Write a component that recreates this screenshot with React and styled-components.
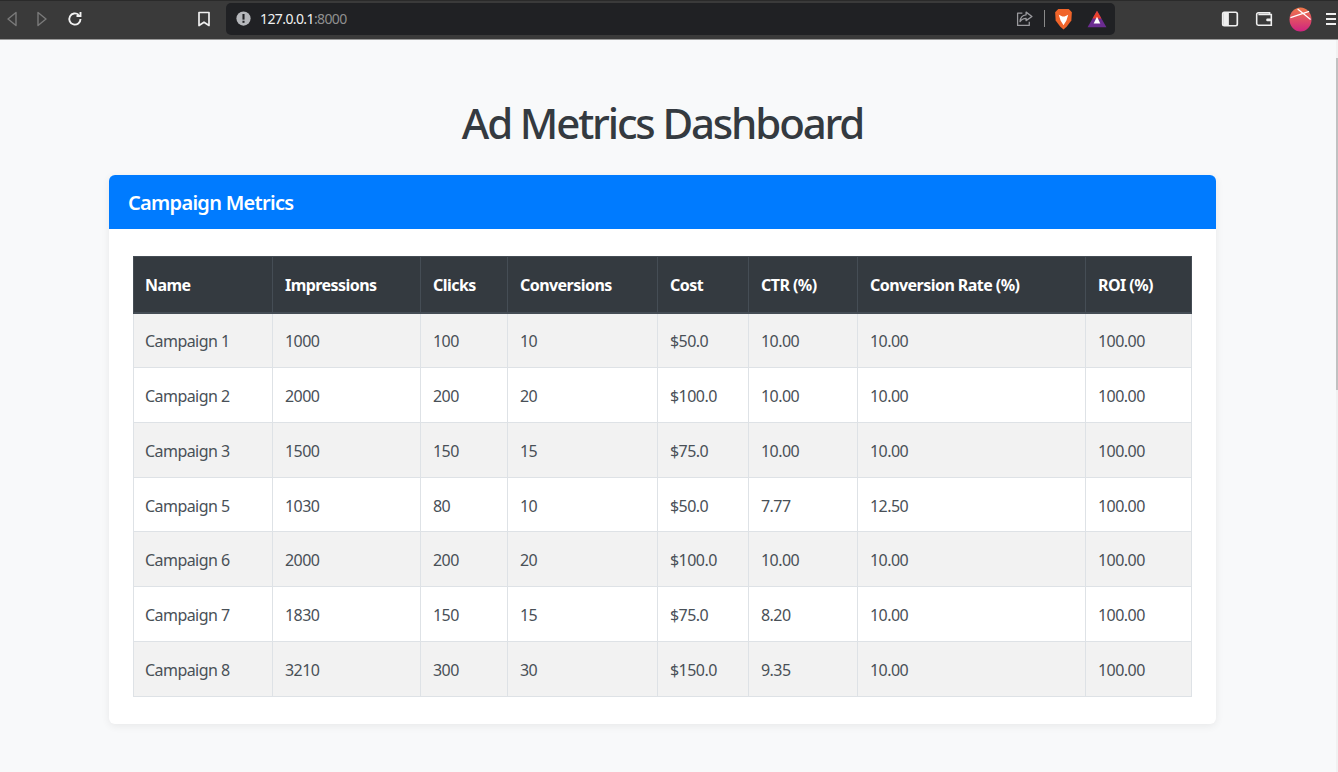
import React from "react"
import styled, { createGlobalStyle } from "styled-components"

const campaigns = [
    ["Campaign 1", "1000", "100", "10", "$50.0", "10.00", "10.00", "100.00"],
    ["Campaign 2", "2000", "200", "20", "$100.0", "10.00", "10.00", "100.00"],
    ["Campaign 3", "1500", "150", "15", "$75.0", "10.00", "10.00", "100.00"],
    ["Campaign 5", "1030", "80", "10", "$50.0", "7.77", "12.50", "100.00"],
    ["Campaign 6", "2000", "200", "20", "$100.0", "10.00", "10.00", "100.00"],
    ["Campaign 7", "1830", "150", "15", "$75.0", "8.20", "10.00", "100.00"],
    ["Campaign 8", "3210", "300", "30", "$150.0", "9.35", "10.00", "100.00"],
]

const headers = ["Name", "Impressions", "Clicks", "Conversions", "Cost", "CTR (%)", "Conversion Rate (%)", "ROI (%)"]
const widths = [139, 148, 87, 150, 91, 109, 228, 106]

const Global = createGlobalStyle`
    html, body {
        margin: 0;
        padding: 0;
        height: 772px;
        overflow: hidden;
        background: #F8F9FA;
        font-family: "Noto Sans", "Open Sans", sans-serif;
    }
`

export default function App() {
    return (
        <>
            <Global />
            <Page>
                <BrowserBar>
                    <NavGroup>
                        <NavIcon viewBox="0 0 16 16"><path d="M12 1.5 L4 8 L12 14.5 Z" fill="none" stroke="#7a7a7a" strokeWidth="1.4" strokeLinejoin="round" /></NavIcon>
                        <NavIcon viewBox="0 0 16 16"><path d="M4 1.5 L12 8 L4 14.5 Z" fill="none" stroke="#7a7a7a" strokeWidth="1.4" strokeLinejoin="round" /></NavIcon>
                        <NavIcon viewBox="0 0 16 16"><path d="M13.5 8 A5.6 5.6 0 1 1 11.7 3.9 M13.5 1 V5 H9.5" fill="none" stroke="#f2f2f2" strokeWidth="1.9" /></NavIcon>
                    </NavGroup>
                    <Bookmark viewBox="0 0 14 16"><path d="M2 1.5 H12 V14.5 L7 11.2 L2 14.5 Z" fill="none" stroke="#efefef" strokeWidth="1.7" strokeLinejoin="round" /></Bookmark>
                    <AddressBar>
                        <UrlInfo viewBox="0 0 16 16">
                            <circle cx="8" cy="8" r="7.6" fill="#b5b7bb" />
                            <rect x="6.9" y="3.2" width="2.2" height="6" fill="#202124" />
                            <rect x="6.9" y="10.4" width="2.2" height="2.2" fill="#202124" />
                        </UrlInfo>
                        <Url>127.0.0.1<span>:8000</span></Url>
                        <UrlTools>
                            <ShareIcon viewBox="0 0 16 16"><path d="M9.5 2 L15 6.2 L9.5 10 V7.8 C6.5 7.8 5 9 3.8 11 C4 7.5 6 4.8 9.5 4.5 Z M6 3 H1.5 V14.5 H12.5 V11" fill="none" stroke="#9a9a9e" strokeWidth="1.2" strokeLinejoin="round" /></ShareIcon>
                            <ToolDivider />
                            <BraveIcon viewBox="0 0 18 21"><path d="M4 1 H14 L17 4 L16.5 12 L12 18 L9 20.5 L6 18 L1.5 12 L1 4 Z" fill="#f0642a" /><path d="M4.5 6.5 L8 8 H10 L13.5 6.5 L11.8 12 L9 16.5 L6.2 12 Z" fill="#fff" /></BraveIcon>
                            <BatIcon viewBox="0 0 18 16"><path d="M9 0.5 L17.5 15.5 H0.5 Z" fill="#6b2c91" /><path d="M9 0.5 L13 7.5 H5 Z" fill="#e8412d" /><path d="M9 6 L12 12 H6 Z" fill="#fff" /></BatIcon>
                        </UrlTools>
                    </AddressBar>
                    <RightTools>
                        <SmallIcon viewBox="0 0 16 16"><rect x="1.5" y="2" width="13" height="12" rx="1.5" fill="none" stroke="#efefef" strokeWidth="1.5" /><rect x="2" y="2.5" width="5" height="11" fill="#efefef" /></SmallIcon>
                        <SmallIcon viewBox="0 0 16 16"><path d="M13 4 V2.5 H3 A1.5 1.5 0 0 0 1.5 4 V12 A1.5 1.5 0 0 0 3 13.5 H14.5 V4 H3" fill="none" stroke="#efefef" strokeWidth="1.4" /><rect x="10" y="7.5" width="4.5" height="2.5" rx="1" fill="#efefef" /></SmallIcon>
                        <Avatar viewBox="0 0 24 26">
                            <defs>
                                <linearGradient id="avatarFill" x1="0" y1="0" x2="0" y2="1">
                                    <stop offset="0" stopColor="#f0784a" />
                                    <stop offset="1" stopColor="#cf2480" />
                                </linearGradient>
                            </defs>
                            <ellipse cx="12" cy="13" rx="11.5" ry="12.5" fill="url(#avatarFill)" />
                            <path d="M1.5 11 L21 4.5 M9 2 L22.5 13" stroke="#fff" strokeWidth="1.2" fill="none" />
                        </Avatar>
                        <Menu viewBox="0 0 12 14"><path d="M1 2 H11 M1 7 H11 M1 12 H11" stroke="#efefef" strokeWidth="1.8" /></Menu>
                    </RightTools>
                </BrowserBar>
                <Content>
                    <Title>Ad Metrics Dashboard</Title>
                    <Card>
                        <CardHeader>Campaign Metrics</CardHeader>
                        <CardBody>
                            <Table>
                                <colgroup>
                                    {widths.map((w, i) => <col key={i} style={{ width: w }} />)}
                                </colgroup>
                                <thead>
                                    <tr>
                                        {headers.map((h) => <Th key={h}>{h}</Th>)}
                                    </tr>
                                </thead>
                                <tbody>
                                    {campaigns.map((linha) => (
                                        <Row key={linha[0]}>
                                            {linha.map((valor, i) => <Td key={i}>{valor}</Td>)}
                                        </Row>
                                    ))}
                                </tbody>
                            </Table>
                        </CardBody>
                    </Card>
                </Content>
                <ScrollTrack>
                    <ScrollThumb />
                </ScrollTrack>
            </Page>
        </>
    )
}

const Page = styled.div`
position: relative;
width: 1338px;
height: 772px;
overflow: hidden;
display: flex;
flex-direction: column;
`

const ScrollTrack = styled.div`
position: absolute;
top: 40px;
right: 0;
bottom: 0;
width: 2px;
background: #F1F1F1;
`

const ScrollThumb = styled.div`
margin-top: 18px;
height: 332px;
background: #C1C1C1;
`

const BrowserBar = styled.div`
height: 38px;
flex-shrink: 0;
background: #3a3a3a;
border-top: 1px solid #2a2a2a;
border-bottom: 1px solid #9a9a9a;
display: flex;
align-items: center;
padding-left: 4px;
`

const NavGroup = styled.div`
display: flex;
align-items: center;
gap: 14px;
margin-top: -2px;
`

const NavIcon = styled.svg`
width: 16px;
height: 16px;

    &:last-child{
        margin-left: 3px;
    }
`

const Bookmark = styled.svg`
width: 14px;
height: 16px;
margin-left: 114px;
margin-top: -2px;
`

const AddressBar = styled.div`
width: 889px;
height: 32px;
margin-left: 15px;
margin-top: -3px;
background: #202124;
border-radius: 5px;
display: flex;
align-items: center;
padding: 0 8px 0 10px;
box-sizing: border-box;
`

const UrlInfo = styled.svg`
width: 15px;
height: 15px;
`

const Url = styled.div`
margin-left: 9px;
font-size: 14px;
color: #f1f1f1;
letter-spacing: -0.6px;

    span{
        color: #8f8f8f;
    }
`

const UrlTools = styled.div`
margin-left: auto;
display: flex;
align-items: center;
gap: 11px;
`

const ToolDivider = styled.div`
width: 1px;
height: 17px;
background: #8a8a8a;
`

const SmallIcon = styled.svg`
width: 18px;
height: 18px;
`

const ShareIcon = styled.svg`
width: 17px;
height: 17px;
`

const BraveIcon = styled.svg`
width: 19px;
height: 22px;
margin-left: -2px;
`

const BatIcon = styled.svg`
width: 20px;
height: 18px;
margin-left: 3px;
`

const RightTools = styled.div`
display: flex;
align-items: center;
gap: 16px;
margin-left: 106px;
margin-top: -2px;
`

const Avatar = styled.svg`
width: 23px;
height: 25px;
`

const Menu = styled.svg`
width: 12px;
height: 14px;
margin-left: -3px;
`

const Content = styled.div`
flex: 1;
padding: 0 122px 0 109px;
display: flex;
flex-direction: column;
`

const Title = styled.h1`
margin: 54px 0 23px;
font-size: 42px;
line-height: 58px;
font-weight: 500;
letter-spacing: -2.15px;
text-align: center;
color: #343A40;
`

const Card = styled.div`
background: #FFFFFF;
border-radius: 6px;
box-shadow: 0 2px 8px rgba(0, 0, 0, 0.07);
overflow: hidden;
`

const CardHeader = styled.div`
height: 54px;
line-height: 55px;
padding-left: 19px;
background: #007BFF;
color: #FFFFFF;
font-size: 20px;
font-weight: 600;
letter-spacing: -0.7px;
`

const CardBody = styled.div`
padding: 27px 24px;
`

const Table = styled.table`
width: 1058px;
table-layout: fixed;
border-collapse: collapse;
font-size: 16px;
letter-spacing: -0.55px;
color: #495057;
`

const Th = styled.th`
height: 56px;
padding: 2px 12px 0;
box-sizing: border-box;
text-align: left;
font-size: 16px;
font-weight: 700;
letter-spacing: -0.55px;
color: #FFFFFF;
background: #343A40;
border: 1px solid #454D55;
border-bottom: 2px solid #454D55;

    &:first-child{
        padding-left: 11px;
    }
`

const Row = styled.tr`
background: #FFFFFF;

    &:nth-child(odd){
        background: #F2F2F2;
    }
`

const Td = styled.td`
height: 54.86px;
padding: 2px 12px 0;
box-sizing: border-box;
border: 1px solid #DEE2E6;

    &:first-child{
        padding-left: 11px;
    }
`
